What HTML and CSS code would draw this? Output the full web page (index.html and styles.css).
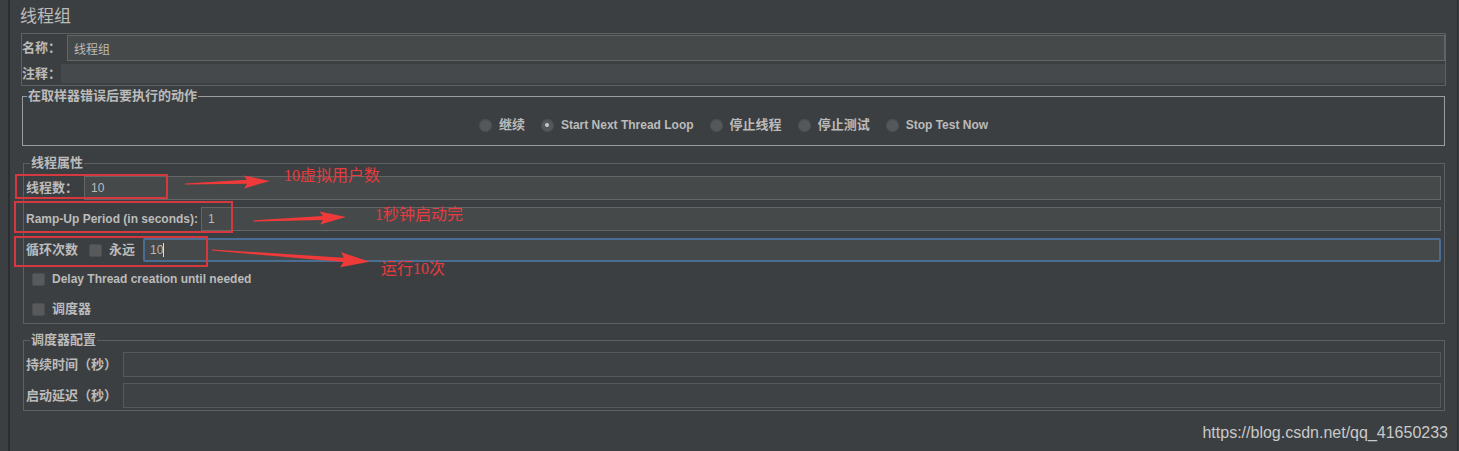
FILE: index.html
```html
<!DOCTYPE html>
<html lang="zh-CN">
<head>
    <meta charset="UTF-8">
    <title>线程组</title>
    <link rel="stylesheet" href="styles.css">
</head>
<body>
    <div class="frame">
        <div class="title">线程组</div>

        <div class="name-panel">
            <div class="name-row">
                <span class="lbl">名称：</span>
                <div class="field">线程组</div>
            </div>
            <div class="comment-row">
                <span class="lbl">注释：</span>
                <div class="field flat"></div>
            </div>
        </div>

        <fieldset class="group on-error">
            <legend>在取样器错误后要执行的动作</legend>
            <div class="radios">
                <label class="radio"><span class="dot"></span>继续</label>
                <label class="radio en"><span class="dot checked"></span>Start Next Thread Loop</label>
                <label class="radio"><span class="dot"></span>停止线程</label>
                <label class="radio"><span class="dot"></span>停止测试</label>
                <label class="radio en"><span class="dot"></span>Stop Test Now</label>
            </div>
        </fieldset>

        <fieldset class="group thread-props">
            <legend>线程属性</legend>
            <div class="row">
                <span class="lbl gap-6">线程数：</span>
                <div class="field">10</div>
            </div>
            <div class="row">
                <span class="lbl en gap-3">Ramp-Up Period (in seconds):</span>
                <div class="field">1</div>
            </div>
            <div class="row last">
                <span class="lbl gap-11">循环次数</span>
                <span class="box"></span>
                <span class="lbl gap-8">永远</span>
                <div class="field focused">10<span class="caret"></span></div>
            </div>
            <label class="check en delay"><span class="box"></span>Delay Thread creation until needed</label>
            <label class="check sched"><span class="box"></span>调度器</label>
        </fieldset>

        <fieldset class="group sched-config">
            <legend>调度器配置</legend>
            <div class="row tall">
                <span class="lbl gap-6">持续时间（秒）</span>
                <div class="field dim"></div>
            </div>
            <div class="row tall">
                <span class="lbl gap-6">启动延迟（秒）</span>
                <div class="field dim"></div>
            </div>
        </fieldset>

        <div class="watermark">https://blog.csdn.net/qq_41650233</div>
    </div>

    <div class="notes">
        <svg class="marks" width="1459" height="451" viewBox="0 0 1459 451">
            <rect x="16" y="175" width="151" height="23" />
            <rect x="15" y="202" width="217" height="30" />
            <rect x="15" y="237" width="192" height="29" />
            <g transform="translate(185 184) rotate(-2)">
                <polygon points="0,-0.6 62,-2 59,-6.5 85,0 59,6.5 62,2 0,0.6" />
            </g>
            <g transform="translate(253 221) rotate(-2.5)">
                <polygon points="0,-0.6 70,-2 67,-6.5 93,0 67,6.5 70,2 0,0.6" />
            </g>
            <g transform="translate(212 250) rotate(4.3)">
                <polygon points="0,-0.6 132,-2.2 129,-7.5 158,0 129,7.5 132,2.2 0,0.6" />
            </g>
        </svg>
        <span class="note n1">10虚拟用户数</span>
        <span class="note n2">1秒钟启动完</span>
        <span class="note n3">运行10次</span>
    </div>
</body>
</html>
```

FILE: styles.css
```css
body {
    margin: 0;
    padding: 0;
    background-color: #3c3f41;
    color: #bbbbbb;
    font-family: "Liberation Sans", "Noto Sans CJK SC", sans-serif;
    font-size: 12px;
    position: relative;
    height: 451px;
    overflow: hidden;
}
.frame {
    margin-left: 8px;
    width: 1450px;
    height: 451px;
    box-sizing: border-box;
    border-left: 2px solid #2b2d2e;
    border-right: 1px solid #2b2d2e;
}
.title {
    padding: 6px 0 0 10px;
    font-size: 17px;
    line-height: 22px;
    height: 22px;
    margin-bottom: 5px;
}
.lbl {
    font-size: 13px;
    font-weight: bold;
    line-height: 16px;
    white-space: nowrap;
}
.en,
.lbl.en {
    font-size: 12px;
}
.field {
    flex: 1;
    box-sizing: border-box;
    background-color: #45494a;
    border: 1px solid #646666;
    padding-left: 6px;
    display: flex;
    align-items: center;
    color: #bbbbbb;
}
.field.flat {
    border: none;
    background-color: #46494b;
}
.field.dim {
    background-color: #3f4244;
    border-color: #56595b;
}
.field.focused {
    border: 2px solid #4a6d93;
    border-radius: 2px;
    padding-left: 5px;
}
.caret {
    display: inline-block;
    width: 1px;
    height: 14px;
    background-color: #dddddd;
}

/* name / comment */
.name-panel {
    margin: 0 11px 0 11px;
    border: 1px solid #5f6264;
    padding: 1px 0 2px 0;
}
.name-row,
.comment-row {
    display: flex;
    align-items: center;
}
.name-row .field {
    height: 26px;
    margin-left: 6px;
}
.comment-row {
    margin-top: 3px;
}
.comment-row .field {
    height: 19px;
}

/* titled groups */
.group {
    margin: 0 12px 0 12px;
    padding: 0;
    border: 1px solid #5d6062;
    min-width: 0;
}
.group legend {
    font-size: 13px;
    font-weight: bold;
    line-height: 16px;
    padding: 0 1px;
    margin-left: 4px;
}
.on-error {
    margin-top: 2px;
    border-color: #9a9c9d;
}
.radios {
    display: flex;
    justify-content: center;
    gap: 16px;
    padding: 13px 0 12px 0;
}
.radio {
    display: flex;
    align-items: center;
    gap: 7px;
    font-size: 13px;
    font-weight: bold;
    line-height: 16px;
}
.radio.en {
    font-size: 12px;
}
.dot {
    width: 13px;
    height: 13px;
    border-radius: 50%;
    background-color: #55585a;
    box-shadow: inset 0 0 0 1px #4a4d4f;
    display: flex;
    align-items: center;
    justify-content: center;
}
.dot.checked::after {
    content: "";
    width: 4px;
    height: 4px;
    border-radius: 50%;
    background-color: #c8c8c8;
}

.thread-props {
    margin-top: 9px;
    margin-left: 13px;
    padding: 5px 3px 6px 2px;
}
.row {
    display: flex;
    align-items: center;
    height: 24px;
    margin-bottom: 7px;
}
.row.last {
    margin-bottom: 0;
}
.row .field {
    height: 24px;
}
.row.tall {
    height: 25px;
    margin-bottom: 6px;
}
.row.tall .field {
    height: 25px;
}
.gap-3 { margin-right: 3px; }
.gap-6 { margin-right: 6px; }
.gap-8 { margin-right: 8px; }
.gap-11 { margin-right: 11px; }
.box {
    width: 13px;
    height: 13px;
    box-sizing: border-box;
    background-color: #57595b;
    border: 1px solid #4c4f51;
    border-radius: 2px;
    margin-right: 7px;
    flex: none;
}
.check {
    display: flex;
    align-items: center;
    line-height: 16px;
    font-size: 13px;
    font-weight: bold;
    margin-left: 6px;
}
.check.en {
    font-size: 12px;
}
.check.delay {
    margin-top: 9px;
}
.check.sched {
    margin-top: 14px;
}

.sched-config {
    margin-top: 8px;
    margin-left: 13px;
    padding: 4px 3px 2px 2px;
}
.sched-config .row.tall:last-child {
    margin-bottom: 0;
}

.watermark {
    text-align: right;
    padding-right: 9px;
    margin-top: 12px;
    font-size: 16px;
    line-height: 20px;
    color: #c9c9c9;
}

/* red annotations drawn over the screenshot */
.notes {
    position: absolute;
    top: 0;
    left: 0;
    width: 1459px;
    height: 451px;
    pointer-events: none;
}
.marks rect {
    fill: none;
    stroke: #d6383f;
    stroke-width: 2;
}
.marks polygon {
    fill: #f03a3a;
}
.note {
    position: absolute;
    color: #e63b3f;
    font-family: "Liberation Serif", "Noto Sans CJK SC", serif;
    font-size: 16px;
    line-height: 20px;
    white-space: nowrap;
}
.n1 { left: 284px; top: 166px; }
.n2 { left: 375px; top: 205px; }
.n3 { left: 381px; top: 259px; }
```
